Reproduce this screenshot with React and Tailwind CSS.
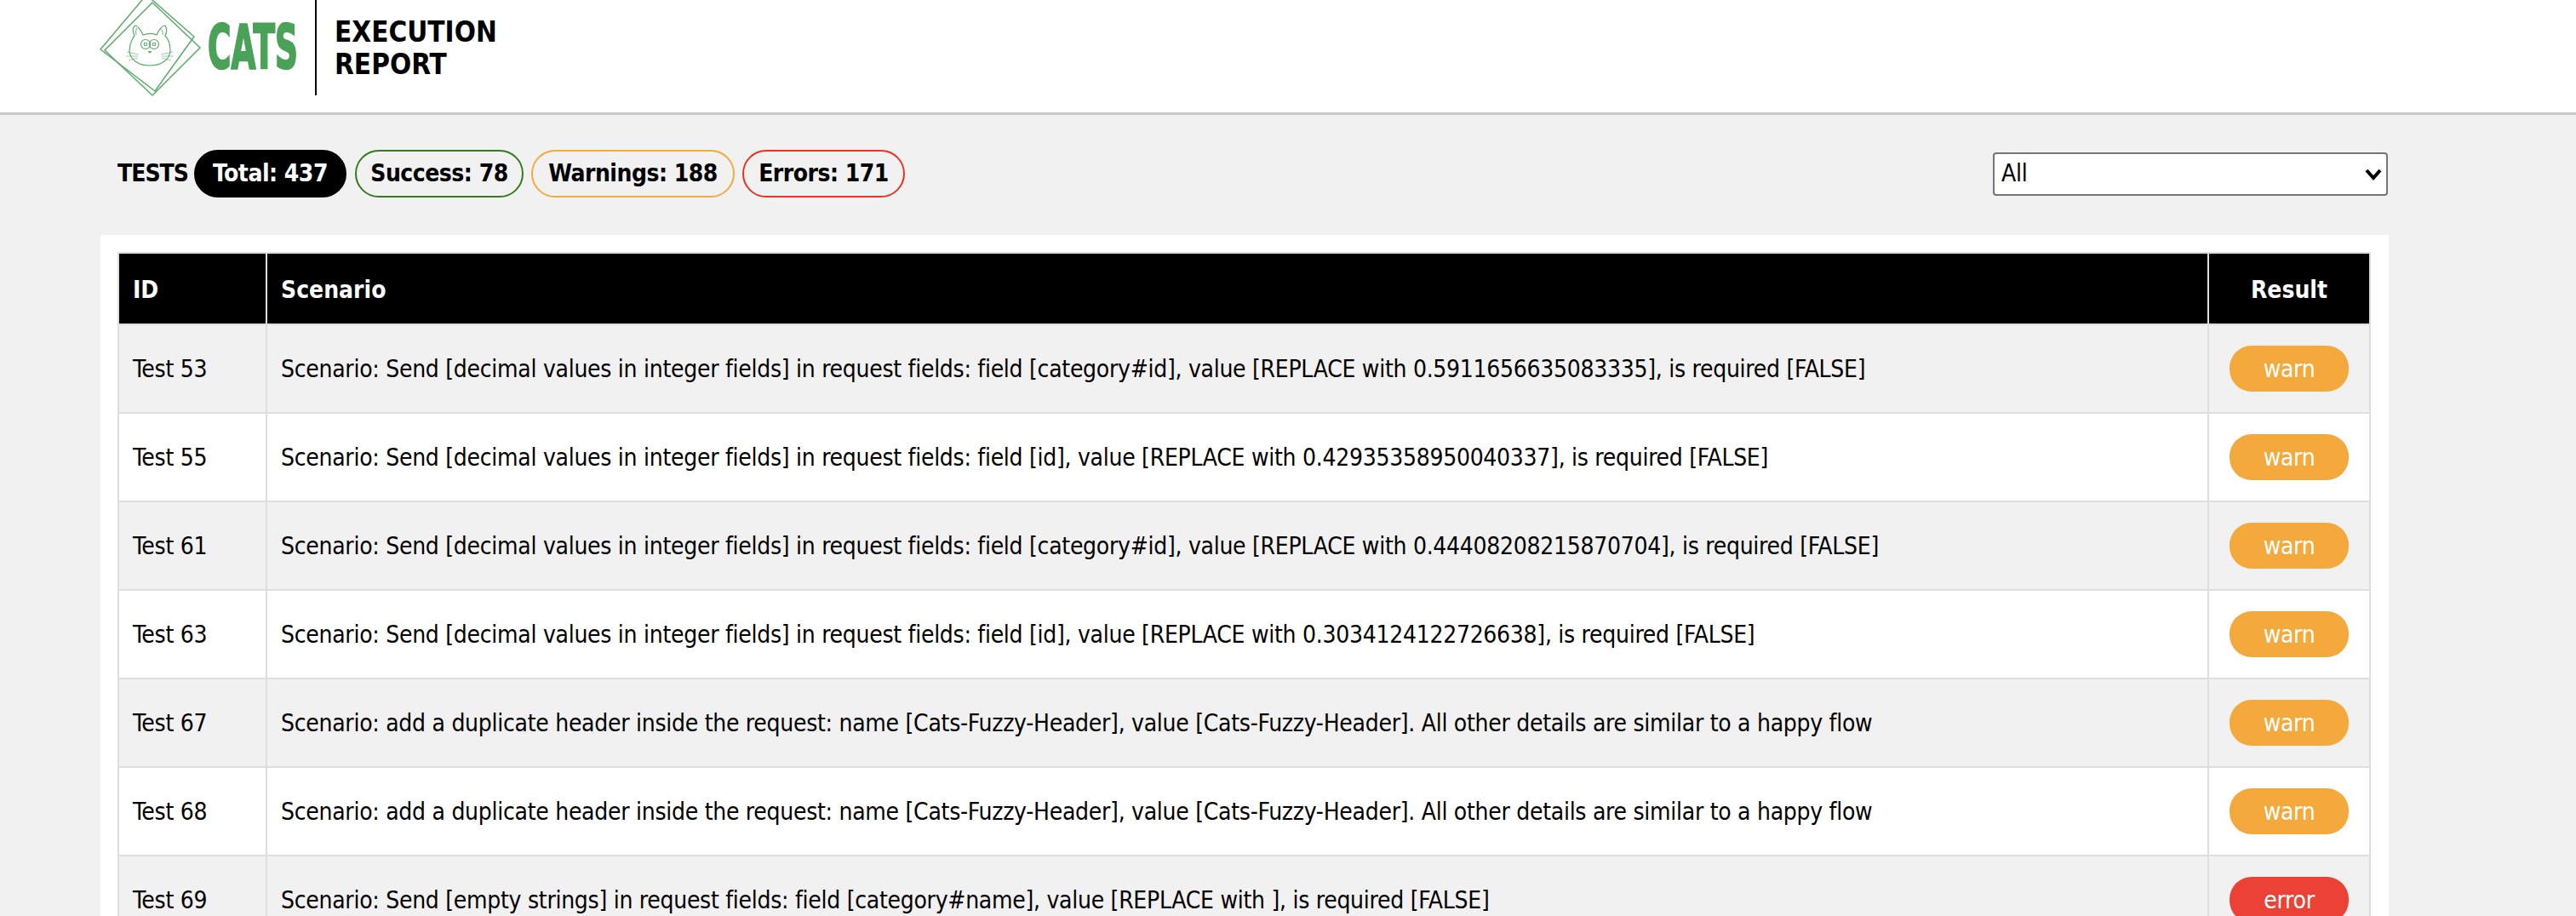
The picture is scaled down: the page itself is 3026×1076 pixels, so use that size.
const F = "font-['DejaVu_Sans_Condensed','DejaVu_Sans',sans-serif]";

const rows = [
  ["Test 53", "Scenario: Send [decimal values in integer fields] in request fields: field [category#id], value [REPLACE with 0.5911656635083335], is required [FALSE]", "warn"],
  ["Test 55", "Scenario: Send [decimal values in integer fields] in request fields: field [id], value [REPLACE with 0.42935358950040337], is required [FALSE]", "warn"],
  ["Test 61", "Scenario: Send [decimal values in integer fields] in request fields: field [category#id], value [REPLACE with 0.44408208215870704], is required [FALSE]", "warn"],
  ["Test 63", "Scenario: Send [decimal values in integer fields] in request fields: field [id], value [REPLACE with 0.3034124122726638], is required [FALSE]", "warn"],
  ["Test 67", "Scenario: add a duplicate header inside the request: name [Cats-Fuzzy-Header], value [Cats-Fuzzy-Header]. All other details are similar to a happy flow", "warn"],
  ["Test 68", "Scenario: add a duplicate header inside the request: name [Cats-Fuzzy-Header], value [Cats-Fuzzy-Header]. All other details are similar to a happy flow", "warn"],
  ["Test 69", "Scenario: Send [empty strings] in request fields: field [category#name], value [REPLACE with ], is required [FALSE]", "error"],
];

function Pill({ className, children }) {
  return (
    <span className={`inline-flex h-[56px] items-center justify-center rounded-[28px] border-2 text-[28px] font-bold tracking-[-0.5px] ${className}`}>{children}</span>
  );
}

export default function App() {
  return (
    <div className={`h-screen overflow-hidden bg-[#f1f1f1] text-black ${F}`}>
      <header className="flex h-[135px] border-b-[3px] border-[#c9c9c9] bg-white">
        <div className="flex h-[132px] pl-[116px]">
          <svg width="122" height="132" viewBox="116 0 122 132" className="block shrink-0">
            <g fill="none" stroke="#5aab68" strokeLinejoin="miter">
              <path d="M123 59 L179 3 L235 56 L179 112 Z" strokeWidth="1.5" />
              <path d="M118 58 L172 -6 L228 43 L182 107 Z" strokeWidth="1.5" />
              <path d="M155 47 C156 45 157 43 158 42 C156 38 156 33 158 30 C162 30 166 36 168 41 C174 39 180 39 184 41 C186 36 190 30 194 30 C196 33 196 38 194 42 C198 46 200 53 200 60 C199 70 190 77 176 77 C162 77 153 70 152 60 C152 55 153 51 155 47 Z" strokeWidth="1.2" />
              <path d="M160 41 C159 37 160 34 161 33 M188 34 C190 34 192 37 191 41" strokeWidth="0.9" />
              <circle cx="171" cy="52" r="5.5" strokeWidth="1.1" />
              <circle cx="181" cy="52" r="5.5" strokeWidth="1.1" />
              <circle cx="171" cy="52" r="1.8" strokeWidth="1.1" />
              <circle cx="181" cy="52" r="1.8" strokeWidth="1.1" />
              <path d="M149 61 L163 64 M148 66 L162 66 M151 71 L162 68 M189 64 L203 61 M190 66 L204 66 M190 68 L201 71" strokeWidth="0.6" />
            </g>
            <path d="M173.5 60 L178.5 60 L176 63 Z" fill="#5aab68" />
          </svg>
          <svg width="116" height="132" viewBox="0 0 116 132" className="ml-[4px] block shrink-0">
            <text x="2" y="80" fontFamily="'DejaVu Sans'" fontWeight="700" fontSize="72" fill="#4aa258" textLength="106" lengthAdjust="spacingAndGlyphs" stroke="#4aa258" strokeWidth="2.5">CATS</text>
          </svg>
        </div>
        <div className="ml-[12px] h-[112px] w-[2px] bg-black" />
        <div className="ml-[21px] mt-[19px] text-[33px] font-bold leading-[38px]">
          <div>EXECUTION</div>
          <div>REPORT</div>
        </div>
      </header>

      <div className="flex h-[141px] items-center justify-between pb-[3px] pl-[138px] pr-[221px]">
        <div className="flex items-center">
          <span className="w-[90px] text-[28px] font-bold tracking-[-1px]">TESTS</span>
          <Pill className="mr-[10px] w-[179px] border-black bg-black text-white">Total: 437</Pill>
          <Pill className="mr-[9px] w-[198px] border-[#357a1f]">Success: 78</Pill>
          <Pill className="mr-[9px] w-[239px] border-[#f3a93c]">Warnings: 188</Pill>
          <Pill className="w-[191px] border-[#eb3323]">Errors: 171</Pill>
        </div>
        <div className="relative">
          <select defaultValue="All" className="block h-[51px] w-[464px] appearance-none rounded-[4px] border-2 border-[#767676] bg-white pl-[8px] text-[28px] tracking-[-0.28px] text-black">
            <option>All</option>
          </select>
          <svg width="20" height="14" viewBox="0 0 20 14" className="pointer-events-none absolute right-[7px] top-[19px]">
            <path d="M2 2 L10 11 L18 2" fill="none" stroke="#000" strokeWidth="4" />
          </svg>
        </div>
      </div>

      <main className="ml-[118px] w-[2688px] bg-white pl-[20px] pr-[21px] pt-[20px]">
        <table className="w-full table-fixed border-collapse">
          <thead>
            <tr className="h-[84px] bg-black text-[28px] font-bold text-white">
              <th className="w-[174px] border-2 border-[#dedede] px-[16px] pt-[4px] text-left">ID</th>
              <th className="border-2 border-[#dedede] px-[16px] pt-[4px] text-left">Scenario</th>
              <th className="w-[190px] border-2 border-[#dedede] pt-[4px] text-center">Result</th>
            </tr>
          </thead>
          <tbody className="text-[28px] tracking-[-0.28px]">
            {rows.map((r, i) => (
              <tr key={r[0]} className={`h-[104px] ${i % 2 === 0 ? "bg-[#f1f1f1]" : "bg-white"}`}>
                <td className="border-2 border-[#dedede] px-[16px] pt-[2px]">{r[0]}</td>
                <td className="border-2 border-[#dedede] px-[16px] pt-[2px]">{r[1]}</td>
                <td className="border-2 border-[#dedede] text-center">
                  <span className={`inline-flex h-[54px] w-[140px] items-center justify-center rounded-[26px] pt-[2px] text-white ${r[2] === "warn" ? "bg-[#f3a93c]" : "bg-[#ec4236]"}`}>{r[2]}</span>
                </td>
              </tr>
            ))}
          </tbody>
        </table>
      </main>
    </div>
  );
}
